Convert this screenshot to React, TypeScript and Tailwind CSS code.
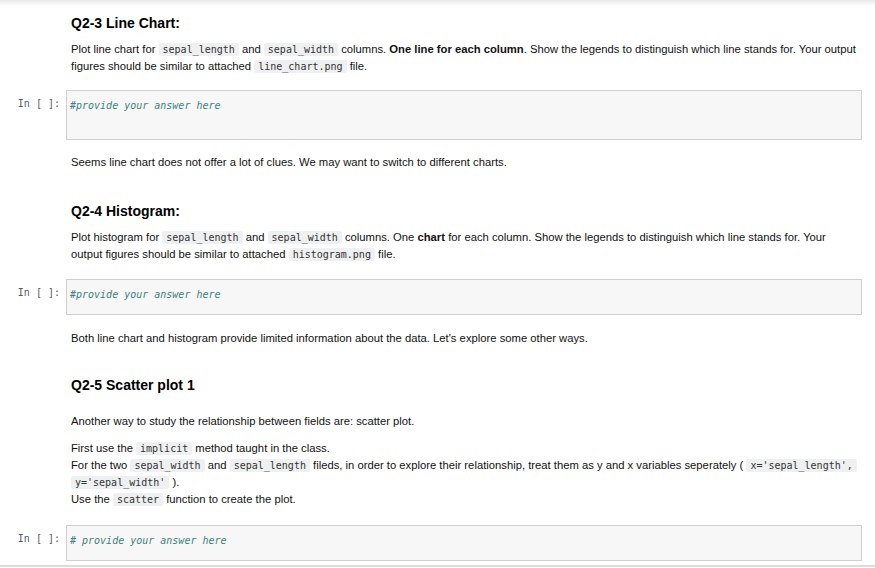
import React from "react";

const sans = "font-['Liberation_Sans',Arial,sans-serif]";
const mono = "font-['DejaVu_Sans_Mono','Liberation_Mono',monospace]";

function Code({ children }: { children: React.ReactNode }) {
  return (
    <code className={`${mono} rounded-[2px] bg-[#eff0f1] px-[4px] py-[1px] text-[10px] text-[#333]`}>{children}</code>
  );
}

function CodeCell({ text, h, mt }: { text: string; h: string; mt: string }) {
  return (
    <div className={`flex ${mt}`}>
      <div className={`${mono} w-[66px] shrink-0 pr-[6px] pt-[7px] text-right text-[10px] leading-[14px] text-[#55596a]`}>In [ ]:</div>
      <div className={`${h} w-[796px] border border-[#cfcfcf] bg-[#f7f7f7] px-[3px] pt-[6px]`}>
        <span className={`${mono} text-[10px] italic leading-[14px] text-[#408080]`}>{text}</span>
      </div>
    </div>
  );
}

export default function App() {
  return (
    <div className={`${sans} relative h-[568px] w-[875px] overflow-hidden bg-white text-[11.25px] leading-[17px] text-[#111]`}>
      <div className="h-[6px] bg-gradient-to-b from-[#e9e9e9] to-white" />

      <div className="pl-[71px]">
        <h2 className="mt-[9px] text-[14px] font-bold leading-[17px] text-black">Q2-3 Line Chart:</h2>
        <p className="mt-[9px] whitespace-nowrap">
          Plot line chart for <Code>sepal_length</Code> and <Code>sepal_width</Code> columns. <b>One line for each column</b>. Show the legends to distinguish which line stands for. Your output
          <br />
          figures should be similar to attached <Code>line_chart.png</Code> file.
        </p>
      </div>

      <CodeCell text="#provide your answer here" h="h-[50px]" mt="mt-[15px]" />

      <div className="pl-[71px]">
        <p className="mt-[14px]">Seems line chart does not offer a lot of clues. We may want to switch to different charts.</p>
        <h2 className="mt-[32px] text-[14px] font-bold leading-[17px] text-black">Q2-4 Histogram:</h2>
        <p className="mt-[9px] whitespace-nowrap">
          Plot histogram for <Code>sepal_length</Code> and <Code>sepal_width</Code> columns. One <b>chart</b> for each column. Show the legends to distinguish which line stands for. Your
          <br />
          output figures should be similar to attached <Code>histogram.png</Code> file.
        </p>
      </div>

      <CodeCell text="#provide your answer here" h="h-[36px]" mt="mt-[16px]" />

      <div className="pl-[71px]">
        <p className="mt-[15px]">Both line chart and histogram provide limited information about the data. Let's explore some other ways.</p>
        <h2 className="mt-[30px] text-[14px] font-bold leading-[17px] text-black">Q2-5 Scatter plot 1</h2>
        <p className="mt-[19px]">Another way to study the relationship between fields are: scatter plot.</p>
        <p className="mt-[10px] whitespace-nowrap">
          First use the <Code>implicit</Code> method taught in the class.
          <br />
          For the two <Code>sepal_width</Code> and <Code>sepal_length</Code> fileds, in order to explore their relationship, treat them as y and x variables seperately ( <Code>x='sepal_length',</Code>
          <br />
          <Code>y='sepal_width'</Code> ).
          <br />
          Use the <Code>scatter</Code> function to create the plot.
        </p>
      </div>

      <CodeCell text="# provide your answer here" h="h-[36px]" mt="mt-[17px]" />

      <div className="mt-[4px] h-[2px] bg-[#dcdcdc]" />
    </div>
  );
}
